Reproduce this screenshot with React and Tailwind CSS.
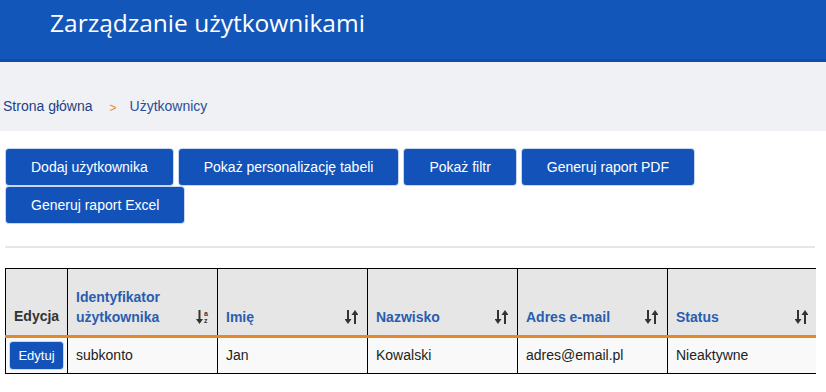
import { useState } from 'react'

const BUTTONS = [
  'Dodaj użytkownika',
  'Pokaż personalizację tabeli',
  'Pokaż filtr',
  'Generuj raport PDF',
  'Generuj raport Excel',
]

const COLUMNS = [
  { id: 'login', label: ['Identyfikator', 'użytkownika'], alpha: true },
  { id: 'name', label: ['Imię'] },
  { id: 'surname', label: ['Nazwisko'] },
  { id: 'email', label: ['Adres e-mail'] },
  { id: 'status', label: ['Status'] },
]

const ROWS = [
  { login: 'subkonto', name: 'Jan', surname: 'Kowalski', email: 'adres@email.pl', status: 'Nieaktywne' },
]

function SortIcon({ alpha }) {
  if (alpha) {
    return (
      <span className="flex items-center gap-[1px] text-[#333]">
        <svg width="7" height="14" viewBox="0 0 7 14" fill="currentColor">
          <rect x="2.5" y="0" width="2" height="10" />
          <path d="M0 9 L7 9 L3.5 14 Z" />
        </svg>
        <span className="flex flex-col text-[7px] font-bold leading-[7px]">
          <span>a</span>
          <span>z</span>
        </span>
      </span>
    )
  }
  return (
    <svg width="13" height="14" viewBox="0 0 13 14" fill="#333">
      <rect x="2" y="0" width="2" height="10" />
      <path d="M-0.5 9 L6.5 9 L3 14 Z" />
      <rect x="9" y="4" width="2" height="10" />
      <path d="M6.5 5 L13.5 5 L10 0 Z" />
    </svg>
  )
}

export default function App() {
  const [rows] = useState(ROWS)

  return (
    <div className="min-h-screen bg-white font-['Liberation_Sans',Arial,sans-serif] text-[14px]">
      {/* Header */}
      <header className="h-[62px] bg-[#1356ba] border-b-[3px] border-[#0f4da9]">
        <h1 className="pl-[50px] pt-[5px] font-['Open_Sans',sans-serif] text-[24.5px] leading-[36px] text-white">
          Zarządzanie użytkownikami
        </h1>
      </header>

      {/* Breadcrumb */}
      <nav className="h-[69px] bg-[#f0f1f5] flex items-end pb-[14px] pl-[3px] text-[14px] text-[#1f3f87]">
        <span>Strona główna</span>
        <span className="ml-[17px] mr-[13px] text-[#e08a2a] text-[12px]">&gt;</span>
        <span className="text-[#2a4d9a]">Użytkownicy</span>
      </nav>

      {/* Actions */}
      <div className="flex flex-wrap gap-x-[6px] gap-y-[2px] pl-[6px] pt-[18px] w-[720px]">
        {BUTTONS.map((b) => (
          <button
            key={b}
            className="h-[36px] px-[25px] rounded-[3px] bg-[#1353b9] text-white text-[14px] shadow-[0_0_0_1px_#c9d6ee]"
          >
            {b}
          </button>
        ))}
      </div>

      <hr className="mx-[5px] mt-[23px] w-[810px] border-0 h-[2px] bg-[#e6e6e6]" />

      {/* Table */}
      <div className="ml-[5px] mt-[20px] w-[811px] overflow-hidden">
        <table className="border-collapse w-[812px] table-fixed">
          <thead>
            <tr className="bg-[#e6e6e6] h-[68px]">
              <th className="w-[62px] border border-black border-b-[3px] border-b-[#e08a2a] align-bottom text-left pl-[8px] pb-[8px] font-bold text-[#333]">
                Edycja
              </th>
              {COLUMNS.map((c) => (
                <th
                  key={c.id}
                  className="w-[150px] border border-black border-b-[3px] border-b-[#e08a2a] align-bottom text-left pl-[8px] pr-[9px] pb-[8px] font-bold text-[#2a5db0]"
                >
                  <div className="flex items-end justify-between">
                    <span className="leading-[20px]">
                      {c.label.map((l) => (
                        <span key={l} className="block">{l}</span>
                      ))}
                    </span>
                    <span className="mb-[3px]">
                      <SortIcon alpha={c.alpha} />
                    </span>
                  </div>
                </th>
              ))}
            </tr>
          </thead>
          <tbody>
            {rows.map((r) => (
              <tr key={r.login} className="bg-[#f9f9f9] h-[37px]">
                <td className="border border-black px-[4px]">
                  <button className="h-[27px] w-[53px] rounded-[3px] bg-[#1353b9] text-white text-[13px] shadow-[0_0_0_1px_#c9d6ee]">
                    Edytuj
                  </button>
                </td>
                {COLUMNS.map((c) => (
                  <td key={c.id} className="border border-black pl-[8px] text-[#222]">
                    {r[c.id]}
                  </td>
                ))}
              </tr>
            ))}
          </tbody>
        </table>
      </div>
    </div>
  )
}
